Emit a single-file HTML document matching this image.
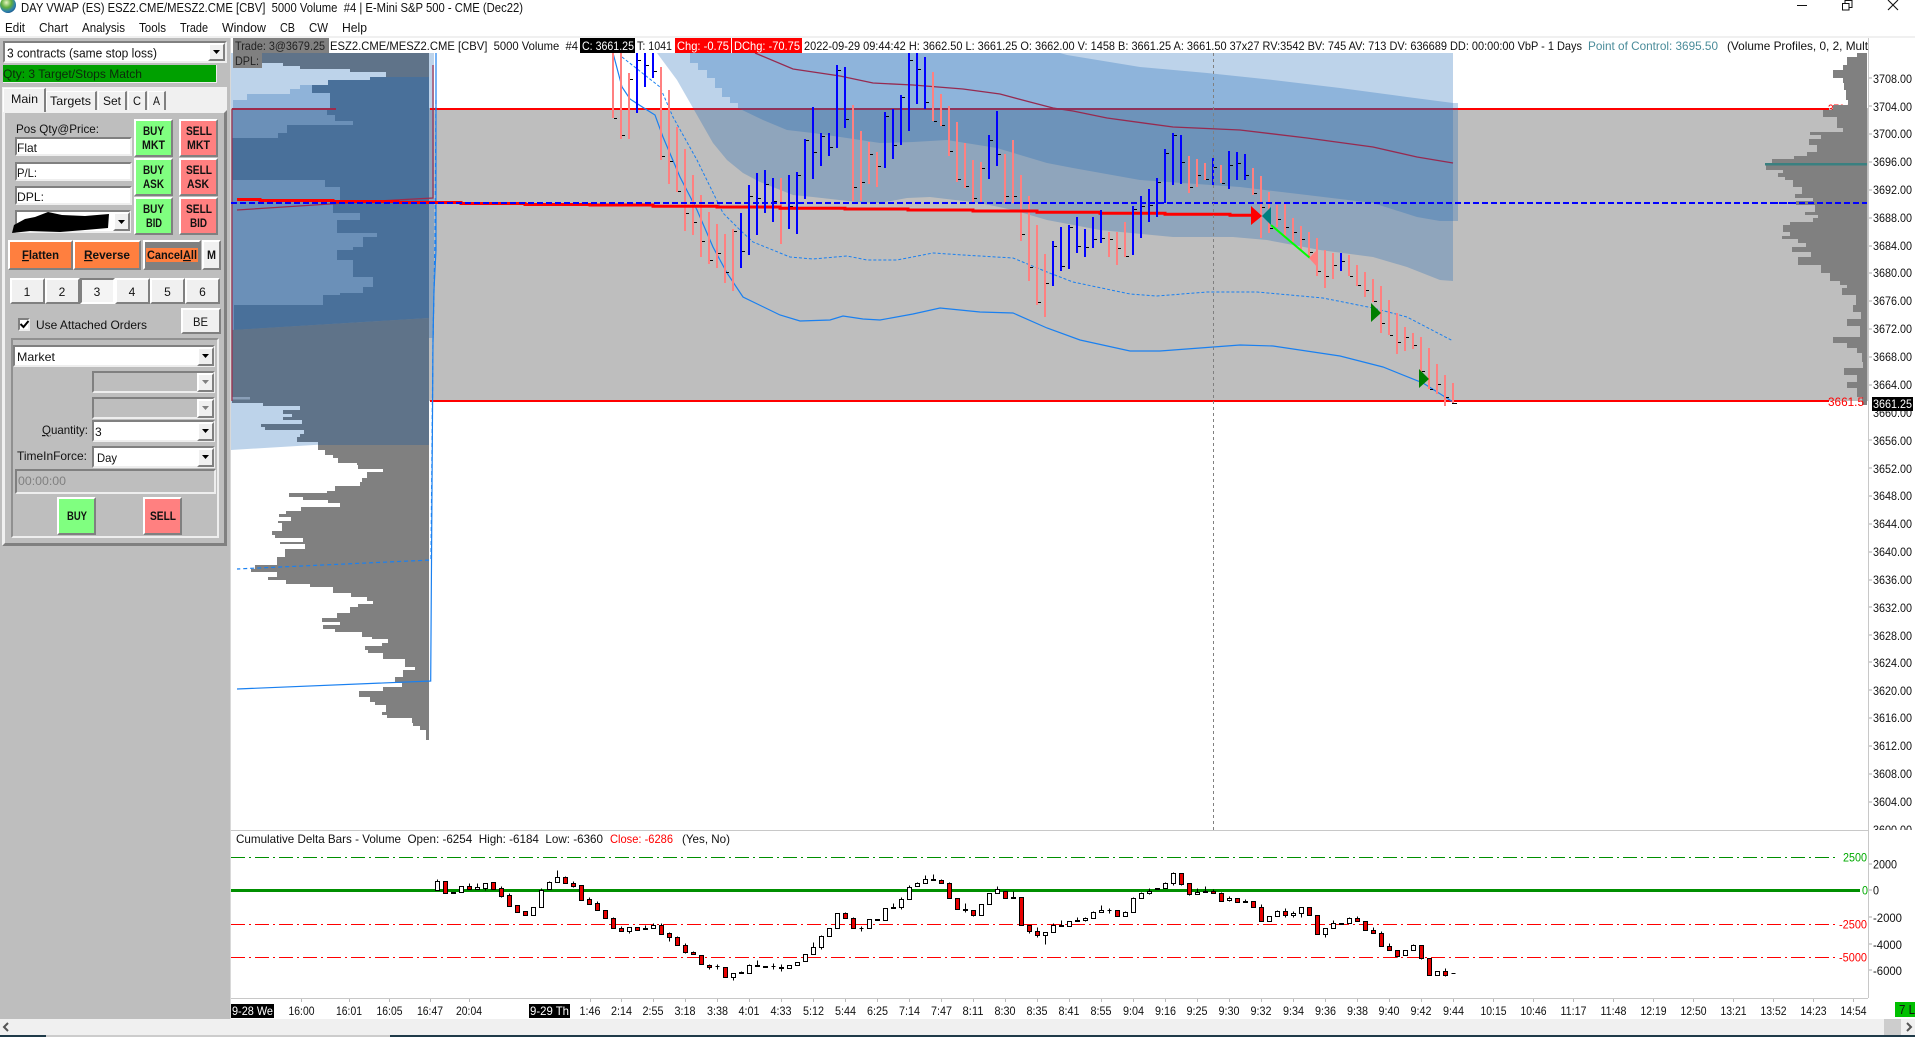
<!DOCTYPE html>
<html><head><meta charset="utf-8"><title>DAY VWAP</title>
<style>
html,body{margin:0;padding:0;width:1915px;height:1037px;overflow:hidden;background:#fff}
.b{position:absolute;box-sizing:border-box}
.r{border:2px solid;border-color:#fff #808080 #808080 #fff}
.s{border:2px solid;border-color:#808080 #eee #eee #808080;background:#fff}
.l{background:#f0f0f0}
svg{position:absolute;left:0;top:0}
text{font-family:"Liberation Sans",sans-serif;font-size:12px;fill:#111;white-space:pre}
.m{font-size:12.5px}
.p{font-weight:bold;font-size:12px;fill:#111}
.w{fill:#fff}.red{fill:#f00}.grn{fill:#0a0}
.c{text-anchor:middle}
</style></head><body>
<div class="b" style="left:0;top:38px;width:230px;height:981px;background:#bebebe"></div>
<div class="b" style="left:0;top:36px;width:1915px;height:2px;background:#f0f0f0"></div>
<div class="b" style="left:230px;top:38px;width:1px;height:981px;background:#d8d8d8"></div>
<div class="b s" style="left:3px;top:41px;width:224px;height:22px"></div>
<div class="b r l" style="left:208px;top:43px;width:17px;height:18px"></div>
<div class="b" style="left:3px;top:65px;width:214px;height:18px;background:#00a000;border-right:1px solid #eee;border-bottom:1px solid #eee"></div>
<div class="b l" style="left:2px;top:87px;width:225px;height:23px"></div>
<div class="b" style="left:2px;top:110px;width:225px;height:436px;background:#bebebe;border:3px solid;border-color:#f0f0f0 #808080 #808080 #f0f0f0"></div>
<div class="b l" style="left:3px;top:88px;width:43px;height:24px;border:1px solid #fff;border-right:2px solid #808080;border-bottom:0"></div>
<div class="b l" style="left:46px;top:91px;width:51px;height:19px;border-left:1px solid #fff;border-top:1px solid #fff;border-right:2px solid #808080"></div>
<div class="b l" style="left:98px;top:91px;width:29px;height:19px;border-left:1px solid #fff;border-top:1px solid #fff;border-right:2px solid #808080"></div>
<div class="b l" style="left:128px;top:91px;width:19px;height:19px;border-left:1px solid #fff;border-top:1px solid #fff;border-right:2px solid #808080"></div>
<div class="b l" style="left:148px;top:91px;width:18px;height:19px;border-left:1px solid #fff;border-top:1px solid #fff;border-right:2px solid #808080"></div>
<div class="b s" style="left:15px;top:137px;width:117px;height:19px"></div>
<div class="b s" style="left:15px;top:162px;width:117px;height:19px"></div>
<div class="b s" style="left:15px;top:186px;width:117px;height:19px"></div>
<div class="b s" style="left:15px;top:210px;width:116px;height:23px"></div>
<div class="b r l" style="left:113px;top:212px;width:17px;height:19px"></div>
<div class="b r" style="left:134px;top:119px;width:39px;height:38px;background:#80ff80"></div>
<div class="b r" style="left:179px;top:119px;width:39px;height:38px;background:#ff8080"></div>
<div class="b r" style="left:134px;top:158px;width:39px;height:38px;background:#80ff80"></div>
<div class="b r" style="left:179px;top:158px;width:39px;height:38px;background:#ff8080"></div>
<div class="b r" style="left:134px;top:197px;width:39px;height:38px;background:#80ff80"></div>
<div class="b r" style="left:179px;top:197px;width:39px;height:38px;background:#ff8080"></div>
<div class="b r" style="left:8px;top:240px;width:65px;height:30px;background:#ff7f3f"></div>
<div class="b r" style="left:73px;top:240px;width:68px;height:30px;background:#ff7f3f"></div>
<div class="b r" style="left:143px;top:240px;width:58px;height:30px;background:#808080"></div>
<div class="b" style="left:146px;top:248px;width:52px;height:14px;background:#ff7f3f"></div>
<div class="b r l" style="left:202px;top:240px;width:19px;height:30px"></div>
<div class="b r l" style="left:10px;top:278px;width:35px;height:26px"></div>
<div class="b r l" style="left:45px;top:278px;width:35px;height:26px"></div>
<div class="b" style="left:80px;top:278px;width:35px;height:26px;background:#f4f4f4;border:2px solid;border-color:#808080 #fff #fff #808080"></div>
<div class="b r l" style="left:115px;top:278px;width:35px;height:26px"></div>
<div class="b r l" style="left:150px;top:278px;width:35px;height:26px"></div>
<div class="b r l" style="left:185px;top:278px;width:35px;height:26px"></div>
<div class="b s" style="left:18px;top:318px;width:12px;height:13px"></div>
<div class="b r l" style="left:181px;top:308px;width:40px;height:26px"></div>
<div class="b" style="left:11px;top:338px;width:208px;height:200px;border:2px solid;border-color:#909090 #eee #eee #909090"></div>
<div class="b s" style="left:13px;top:345px;width:202px;height:22px"></div>
<div class="b r l" style="left:197px;top:347px;width:17px;height:19px"></div>
<div class="b s" style="left:92px;top:371px;width:123px;height:22px;background:#bebebe"></div>
<div class="b r l" style="left:197px;top:373px;width:17px;height:19px"></div>
<div class="b s" style="left:92px;top:397px;width:123px;height:22px;background:#bebebe"></div>
<div class="b r l" style="left:197px;top:399px;width:17px;height:19px"></div>
<div class="b s" style="left:92px;top:420px;width:123px;height:22px"></div>
<div class="b r l" style="left:197px;top:422px;width:17px;height:19px"></div>
<div class="b s" style="left:92px;top:446px;width:123px;height:22px"></div>
<div class="b r l" style="left:197px;top:448px;width:17px;height:19px"></div>
<div class="b s" style="left:15px;top:469px;width:201px;height:25px;background:#bebebe"></div>
<div class="b r" style="left:57px;top:497px;width:39px;height:38px;background:#80ff80"></div>
<div class="b r" style="left:143px;top:497px;width:39px;height:38px;background:#ff8080"></div>
<div class="b l" style="left:0;top:1019px;width:1915px;height:16px"></div>
<div class="b" style="left:1884px;top:1019px;width:17px;height:16px;background:#cdcdcd"></div>
<div class="b" style="left:0;top:1035px;width:46px;height:2px;background:#1f3a48"></div>
<div class="b" style="left:46px;top:1035px;width:344px;height:2px;background:#ccc"></div>
<div class="b" style="left:390px;top:1035px;width:1525px;height:2px;background:#1f3a48"></div>
<svg width="1915" height="1037" viewBox="0 0 1915 1037" xmlns="http://www.w3.org/2000/svg">
<defs>
<radialGradient id="g" cx=".4" cy=".35" r=".7"><stop offset="0" stop-color="#e6f4c0"/><stop offset=".45" stop-color="#5fae3c"/><stop offset=".8" stop-color="#2b7fb0"/><stop offset="1" stop-color="#17507f"/></radialGradient>
</defs>
<circle cx="8" cy="5" r="8" fill="url(#g)"/>
<text class="m" x="21" y="12" textLength="502" lengthAdjust="spacingAndGlyphs">DAY VWAP (ES) ESZ2.CME/MESZ2.CME [CBV]  5000 Volume  #4 | E-Mini S&amp;P 500 - CME (Dec22)</text>
<text class="m" x="5" y="32" textLength="20" lengthAdjust="spacingAndGlyphs">Edit</text>
<text class="m" x="39" y="32" textLength="29" lengthAdjust="spacingAndGlyphs">Chart</text>
<text class="m" x="82" y="32" textLength="43" lengthAdjust="spacingAndGlyphs">Analysis</text>
<text class="m" x="139" y="32" textLength="27" lengthAdjust="spacingAndGlyphs">Tools</text>
<text class="m" x="180" y="32" textLength="28" lengthAdjust="spacingAndGlyphs">Trade</text>
<text class="m" x="222" y="32" textLength="44" lengthAdjust="spacingAndGlyphs">Window</text>
<text class="m" x="280" y="32" textLength="15" lengthAdjust="spacingAndGlyphs">CB</text>
<text class="m" x="309" y="32" textLength="19" lengthAdjust="spacingAndGlyphs">CW</text>
<text class="m" x="342" y="32" textLength="25" lengthAdjust="spacingAndGlyphs">Help</text>
<path d="M1797 5.500h10" stroke="#111" fill="none"/>
<path d="M1845 3.500v-3h7v7h-3M1842.500 3.500h6.500v6.500h-6.500z" stroke="#111" fill="none"/>
<path d="M1888 0l10 10M1898 0l-10 10" stroke="#111" stroke-width="1.100" fill="none"/>

<text x="7" y="57.500" class="m" textLength="150" lengthAdjust="spacingAndGlyphs">3 contracts (same stop loss)</text>
<path d="M213 50h7l-3.500 4z" fill="#000"/>
<text x="3" y="78" textLength="139" lengthAdjust="spacingAndGlyphs" style="fill:#0b2a0b">Qty: 3 Target/Stops Match</text>
<text x="11" y="103" textLength="27" lengthAdjust="spacingAndGlyphs">Main</text>
<text x="50" y="105" textLength="41" lengthAdjust="spacingAndGlyphs">Targets</text>
<text x="103" y="105" textLength="18" lengthAdjust="spacingAndGlyphs">Set</text>
<text x="133" y="105" textLength="8" lengthAdjust="spacingAndGlyphs">C</text>
<text x="153" y="105" textLength="7" lengthAdjust="spacingAndGlyphs">A</text>
<text x="16" y="133" textLength="83" lengthAdjust="spacingAndGlyphs">Pos Qty@Price:</text>
<text x="17" y="152" textLength="20" lengthAdjust="spacingAndGlyphs">Flat</text>
<text x="17" y="177" textLength="20" lengthAdjust="spacingAndGlyphs">P/L:</text>
<text x="17" y="201" textLength="27" lengthAdjust="spacingAndGlyphs">DPL:</text>
<path d="M12 233L14 225 25 219 35 217 48 212 62 215 85 216 109 214 108 228 85 230 60 232 30 231Z" fill="#000"/>
<path d="M118 220h7l-3.500 4z" fill="#000"/>
<text class="p" x="143" y="135" textLength="21" lengthAdjust="spacingAndGlyphs">BUY</text>
<text class="p" x="142" y="149" textLength="23" lengthAdjust="spacingAndGlyphs">MKT</text>
<text class="p" x="186" y="135" textLength="26" lengthAdjust="spacingAndGlyphs">SELL</text>
<text class="p" x="187" y="149" textLength="23" lengthAdjust="spacingAndGlyphs">MKT</text>
<text class="p" x="143" y="174" textLength="21" lengthAdjust="spacingAndGlyphs">BUY</text>
<text class="p" x="143" y="188" textLength="21" lengthAdjust="spacingAndGlyphs">ASK</text>
<text class="p" x="186" y="174" textLength="26" lengthAdjust="spacingAndGlyphs">SELL</text>
<text class="p" x="187" y="188" textLength="22" lengthAdjust="spacingAndGlyphs">ASK</text>
<text class="p" x="143" y="213" textLength="21" lengthAdjust="spacingAndGlyphs">BUY</text>
<text class="p" x="146" y="227" textLength="16" lengthAdjust="spacingAndGlyphs">BID</text>
<text class="p" x="186" y="213" textLength="26" lengthAdjust="spacingAndGlyphs">SELL</text>
<text class="p" x="190" y="227" textLength="17" lengthAdjust="spacingAndGlyphs">BID</text>
<text class="p" x="22" y="259" textLength="37" lengthAdjust="spacingAndGlyphs"><tspan text-decoration="underline">F</tspan>latten</text>
<text class="p" x="84" y="259" textLength="46" lengthAdjust="spacingAndGlyphs"><tspan text-decoration="underline">R</tspan>everse</text>
<text class="p" x="147" y="259" textLength="50" lengthAdjust="spacingAndGlyphs">Cancel<tspan text-decoration="underline">A</tspan>ll</text>
<text class="p" x="207" y="259" textLength="9" lengthAdjust="spacingAndGlyphs">M</text>
<text class="c" x="27" y="296">1</text><text class="c" x="62" y="296">2</text><text class="c" x="97" y="296">3</text><text class="c" x="132" y="296">4</text><text class="c" x="167.500" y="296">5</text><text class="c" x="202.500" y="296">6</text>
<path d="M20.500 324l3 3 5-6" stroke="#000" stroke-width="2" fill="none"/>
<text x="36" y="329" textLength="111" lengthAdjust="spacingAndGlyphs">Use Attached Orders</text>
<text x="193" y="326" textLength="15" lengthAdjust="spacingAndGlyphs">BE</text>
<text x="17" y="361" textLength="38" lengthAdjust="spacingAndGlyphs">Market</text>
<path d="M202 354h7l-3.500 4z" fill="#000"/>
<path d="M202 380h7l-3.500 4zM202 406h7l-3.500 4z" fill="#808080"/>
<text x="42" y="434" textLength="46" lengthAdjust="spacingAndGlyphs"><tspan text-decoration="underline">Q</tspan>uantity:</text>
<text x="95" y="436">3</text>
<path d="M202 429h7l-3.500 4z" fill="#000"/>
<text x="17" y="460" textLength="70" lengthAdjust="spacingAndGlyphs">TimeInForce:</text>
<text x="97" y="462" textLength="20" lengthAdjust="spacingAndGlyphs">Day</text>
<path d="M202 455h7l-3.500 4z" fill="#000"/>
<text x="18" y="485" textLength="48" lengthAdjust="spacingAndGlyphs" style="fill:#808080">00:00:00</text>
<text class="p" x="67" y="520" textLength="20" lengthAdjust="spacingAndGlyphs">BUY</text>
<text class="p" x="150" y="520" textLength="26" lengthAdjust="spacingAndGlyphs">SELL</text>

<rect x="231" y="108" width="1637" height="293" fill="#bebebe"/>
<path d="M231 53H434V108H231Z" fill="#bdd3ea"/>
<path d="M231 401H429V438L231 450Z" fill="#bdd3ea"/>
<path d="M429 53H262V63H283V66H300V69H350V72H386V77H429Z" fill="#5f7389"/>
<path d="M233 108V100H247V94H290V89H300V85H330V108Z" fill="#8fb3d9"/>
<path d="M232 108H429V330H232Z" fill="#6b90b8"/>
<path d="M429 77H370V80H328V85H312V93H330V108H327V115H335V121H353V125H287V133H278V138H232V180H325V187H340V200H333V213H360V220H337V233H377V237H363V247H353V250H337V260H353V277H373V287H363V293H340V295H323V305H234V330L429 318Z" fill="#49709a"/>
<path d="M232 330L429 318V445H318V442H297V437H300V434H304V430H265V427H261V424H302V420H283V417H292V414H283V410H300V406H263V403H232Z" fill="#5f7389"/>
<rect x="232" y="397" width="18" height="2.500" fill="#8a9fb8"/>
<path d="M429 445H318V450H325V455H333V458H338V463H357V465H358V469H383V472H367V478H362V482H360V486H335V491H327V493H289V497H303V500H328V503H340V507H301V511H286V514H279V517H291V521H278V523H282V531H272V535H275V538H303V542H280V544H305V549H285V557H277V565H255V569H251V572H277V577H268V580H286V584H310V587H333V593H351V597H367V601H373V604H358V607H350V613H337V618H322V622H340V625H323V629H335V632H362V637H372V639H388V643H382V646H365V650H368V653H383V659H405V667H415V670H403V677H395V683H402V687H383V691H359V697H370V702H375V705H386V712H382V715H387V718H412V723H413V726H420V730H426V740H429Z" fill="#808080"/>
<rect x="429" y="53" width="5" height="55" fill="#bdd3ea"/>
<rect x="429" y="108" width="5" height="230" fill="#8ea4bc"/>
<text x="1828" y="113" class="red" textLength="36" lengthAdjust="spacingAndGlyphs">3704.00</text>
<rect x="1828" y="110" width="40" height="8" fill="#bebebe"/>
<path d="M430 109H1829M430 401H1829" stroke="#f00" stroke-width="2" fill="none"/>
<path d="M232 109V401M433 65V198L395 200 330 204 237 210" stroke="#9d2b4c" stroke-width="1.200" fill="none"/>
<path d="M232 109H336" stroke="#9d2b4c" stroke-width="2" fill="none"/>
<path d="M657 53L677 80 693 108 713 143 727 160 743 173 760 182 793 195 813 197 857 202 880 203 907 198 930 197 980 203 1013 210 1047 220 1100 230 1173 237 1233 237 1267 240 1320 250 1373 257 1407 267 1440 280 1453 281V53Z" fill="rgb(28,103,183)" fill-opacity=".29"/>
<path d="M690 53V63H698V70H707V78H715V88H722V97H730V103H738V108L763 120 787 130 813 133 847 138 880 143 913 142 947 140 997 148 1047 163 1073 168 1140 180 1240 187 1307 195 1373 203 1417 217 1440 221H1458V103H1453L1407 97 1340 88 1273 80 1207 73 1140 67 1067 55 1060 53Z" fill="rgb(28,103,183)" fill-opacity=".29"/>
<path d="M755 53L793 69 840 76 873 83 913 85 963 89 1000 94 1030 102 1053 108 1073 111 1107 118 1173 127 1240 130 1307 138 1373 147 1417 157 1453 163" stroke="#962a50" stroke-width="1.300" fill="none"/>
<path d="M622 57L660 87 673 117 697 160 723 213 740 230 753 242 790 257 813 259 847 256 867 260 897 260 933 253 963 255 1013 258 1047 272 1073 282 1130 294 1157 296 1207 292 1257 292 1323 298 1373 308 1407 317 1453 341" stroke="#1a80f0" stroke-width="1" stroke-dasharray="3 2" fill="none"/>
<path d="M613 53L622 87 630 99 647 110 655 115 663 137 680 177 697 210 713 247 727 273 743 297 780 315 800 321 830 320 843 316 863 319 880 320 913 314 940 308 980 312 1013 313 1047 328 1080 340 1130 351 1160 351 1200 348 1240 345 1273 346 1340 356 1383 367 1423 383 1453 402" stroke="#1a80f0" stroke-width="1.200" fill="none"/>
<path d="M436 53V250L434 290 433 340 431.700 533 430.700 681 237 689" stroke="#1a80f0" stroke-width="1.200" fill="none"/>
<path d="M436 100L435 240 433 340 431 560 237 569" stroke="#1a80f0" stroke-width="1.200" stroke-dasharray="4 3" fill="none"/>
<path d="M613 53V118M621 53V139M629 73V139M661 67V160M669 90V184M677 127V192M685 149V231M693 175V235M701 195V257M709 212V264M717 224V268M725 234V283M733 229V291M781 178V244M853 105V201M861 131V201M869 142V184M877 152V187M933 72V121M941 94V126M949 106V156M957 122V182M965 143V188M973 160V203M981 162V202M1005 154V203M1013 140V203M1021 175V241M1029 196V281M1037 225V305M1045 254V317M1109 232V257M1117 232V265M1125 222V257M1189 156V193M1197 159V187M1205 163V180M1221 165V183M1253 168V195M1261 176V238M1269 192V233M1277 205V227M1285 203V237M1293 218V242M1301 226V250M1309 232V258M1317 238V276M1325 250V288M1333 253V279M1349 255V276M1357 265V286M1365 272V297M1373 279V302M1381 286V333M1389 300V335M1397 313V354M1405 327V351M1413 333V349M1421 337V373M1429 348V389M1437 364V394M1445 375V406M1453 383V403" stroke="#ff8080" stroke-width="2" fill="none"/>
<path d="M237 199.500H260V200.500H333V201.500H398V202.500H461V203.500H525V204.500H590V205H653V206.300H717V207H780V208.300H845V209H908V210H973V211H1037V212.300H1100V213.300H1165V214.300H1230V215.300H1253" stroke="#f00" stroke-width="3" fill="none"/>
<path d="M637 53V113M645 53V87M653 53V78M741 213V268M749 185V255M757 173V235M765 170V213M773 178V222M789 175V229M797 172V234M805 139V199M813 107V179M821 133V166M829 133V156M837 65V148M845 67V128M885 112V168M893 109V159M901 95V145M909 53V131M917 53V104M925 57V109M989 135V179M997 111V166M1053 241V286M1061 227V271M1069 225V269M1077 217V253M1085 229V257M1093 217V248M1101 210V243M1133 206V255M1141 196V238M1149 189V222M1157 178V217M1165 149V203M1173 133V185M1181 135V184M1213 158V185M1229 151V189M1237 152V180M1245 154V180M1341 253V271" stroke="#00f" stroke-width="2" fill="none"/>
<path d="M614 118.500h3M622 135.500h3M630 79.500h3M638 60.500h3M646 65.500h3M654 71.500h3M662 156.500h3M670 161.500h3M678 191.500h3M686 213.500h3M694 222.500h3M702 241.500h3M710 260.500h3M718 253.500h3M726 272.500h3M734 231.500h3M742 251.500h3M750 196.500h3M758 198.500h3M766 184.500h3M774 201.500h3M782 202.500h3M790 206.500h3M798 175.500h3M806 140.500h3M814 152.500h3M822 136.500h3M830 147.500h3M838 70.500h3M846 119.500h3M854 187.500h3M862 182.500h3M870 154.500h3M878 166.500h3M886 116.500h3M894 145.500h3M902 97.500h3M910 60.500h3M918 69.500h3M926 102.500h3M934 121.500h3M942 125.500h3M950 151.500h3M958 179.500h3M966 186.500h3M974 198.500h3M982 168.500h3M990 140.500h3M998 154.500h3M1006 196.500h3M1014 196.500h3M1022 234.500h3M1030 267.500h3M1038 302.500h3M1046 283.500h3M1054 246.500h3M1062 266.500h3M1070 227.500h3M1078 246.500h3M1086 247.500h3M1094 239.500h3M1102 238.500h3M1110 239.500h3M1118 248.500h3M1126 256.500h3M1134 209.500h3M1142 206.500h3M1150 205.500h3M1158 182.500h3M1166 153.500h3M1174 135.500h3M1182 162.500h3M1190 187.500h3M1198 175.500h3M1206 179.500h3M1214 167.500h3M1222 183.500h3M1230 165.500h3M1238 163.500h3M1246 175.500h3M1254 193.500h3M1262 207.500h3M1270 228.500h3M1278 219.500h3M1286 227.500h3M1294 232.500h3M1302 239.500h3M1310 252.500h3M1318 271.500h3M1326 276.500h3M1334 265.500h3M1342 261.500h3M1350 276.500h3M1358 285.500h3M1366 290.500h3M1374 301.500h3M1382 323.500h3M1390 335.500h3M1398 342.500h3M1406 337.500h3M1414 345.500h3M1422 371.500h3M1430 389.500h3M1438 384.500h3M1446 397.500h3M1452 403.500h5" stroke="#000" stroke-width="1" fill="none"/>
<path d="M1271 225L1310 258" stroke="#0f0" stroke-width="2" fill="none"/>
<path d="M1251 206L1262 216 1251 225Z" fill="#f00"/>
<path d="M1271 207L1262 216 1271 225Z" fill="#007f7f"/>
<path d="M1318 249L1309 258 1318 268Z" fill="#ff8080"/>
<path d="M1371 303L1381 313 1371 322Z" fill="#007f00"/>
<path d="M1419 369L1429 379 1419 388Z" fill="#007f00"/>
<path d="M231 203H1868" stroke="#00f" stroke-width="2" stroke-dasharray="6 3" fill="none"/>
<path d="M1213.500 53V830" stroke="#808080" stroke-dasharray="3 3" fill="none"/>
<path d="M1867 53H1857V57H1847V65H1843V70H1833V78H1843V83H1844V90H1846V100H1848V105H1833V110H1823V117H1837V128H1843V132H1810V135H1821V139H1809V145H1817V152H1807V156H1794V159H1772V163H1766V170H1783V173H1778V177H1785V180H1793V187H1802V194H1795V198H1813V201H1796V205H1815V212H1805V215H1818V218H1813V222H1790V225H1783V232H1790V236H1782V239H1798V243H1806V247H1792V252H1811V257H1798V265H1821V273H1830V281H1840V285H1847V288H1842V295H1856V305H1853V312H1861V319H1847V326H1860V337H1833V343H1847V348H1857V353H1862V362H1863V368H1844V375H1857V382H1847V388H1857V397H1862V405H1867Z" fill="#808080"/>
<rect x="1765" y="163" width="102" height="2.500" fill="#3a8080"/>
<path d="M1772 203H1867" stroke="#00f" stroke-width="2" stroke-dasharray="6 3" fill="none"/>
<text x="1828" y="406" class="red" textLength="36" lengthAdjust="spacingAndGlyphs">3661.5</text>
<rect x="231" y="38" width="1637" height="15" fill="#fff"/>
<rect x="233" y="38" width="96" height="15" fill="#808080"/>
<rect x="233" y="53" width="29" height="15" fill="#808080"/>
<text x="235" y="50" textLength="90" lengthAdjust="spacingAndGlyphs" style="fill:#222">Trade: 3@3679.25</text>
<text x="235" y="65" textLength="24" lengthAdjust="spacingAndGlyphs" style="fill:#222">DPL:</text>
<text x="330" y="50" textLength="248" lengthAdjust="spacingAndGlyphs">ESZ2.CME/MESZ2.CME [CBV]  5000 Volume  #4</text>
<rect x="580" y="38" width="55" height="15" fill="#000"/>
<text class="w" x="582" y="50" textLength="52" lengthAdjust="spacingAndGlyphs">C: 3661.25</text>
<text x="637" y="50" textLength="35" lengthAdjust="spacingAndGlyphs">T: 1041</text>
<rect x="675" y="38" width="56" height="15" fill="#f00"/><rect x="732" y="38" width="70" height="15" fill="#f00"/>
<text class="w" x="677" y="50" textLength="52" lengthAdjust="spacingAndGlyphs">Chg: -0.75</text>
<text class="w" x="734" y="50" textLength="66" lengthAdjust="spacingAndGlyphs">DChg: -70.75</text>
<text x="804" y="50" textLength="778" lengthAdjust="spacingAndGlyphs">2022-09-29 09:44:42 H: 3662.50 L: 3661.25 O: 3662.00 V: 1458 B: 3661.25 A: 3661.50 37x27 RV:3542 BV: 745 AV: 713 DV: 636689 DD: 00:00:00 VbP - 1 Days</text>
<text x="1588" y="50" textLength="130" lengthAdjust="spacingAndGlyphs" style="fill:#4a8c9a">Point of Control: 3695.50</text>
<text x="1727" y="50" textLength="141" lengthAdjust="spacingAndGlyphs">(Volume Profiles, 0, 2, Mult</text>
<path d="M1868.500 38V998" stroke="#c8c8c8" fill="none"/>
<path d="M1869 78h3M1869 106h3M1869 134h3M1869 162h3M1869 190h3M1869 218h3M1869 246h3M1869 273h3M1869 301h3M1869 329h3M1869 357h3M1869 385h3M1869 440h3M1869 468h3M1869 496h3M1869 524h3M1869 552h3M1869 580h3M1869 607h3M1869 635h3M1869 662h3M1869 690h3M1869 718h3M1869 746h3M1869 774h3M1869 802h3" stroke="#aaa" fill="none"/>
<text x="1873" y="83" textLength="39" lengthAdjust="spacingAndGlyphs">3708.00</text>
<text x="1873" y="111" textLength="39" lengthAdjust="spacingAndGlyphs">3704.00</text>
<text x="1873" y="138" textLength="39" lengthAdjust="spacingAndGlyphs">3700.00</text>
<text x="1873" y="166" textLength="39" lengthAdjust="spacingAndGlyphs">3696.00</text>
<text x="1873" y="194" textLength="39" lengthAdjust="spacingAndGlyphs">3692.00</text>
<text x="1873" y="222" textLength="39" lengthAdjust="spacingAndGlyphs">3688.00</text>
<text x="1873" y="250" textLength="39" lengthAdjust="spacingAndGlyphs">3684.00</text>
<text x="1873" y="277" textLength="39" lengthAdjust="spacingAndGlyphs">3680.00</text>
<text x="1873" y="305" textLength="39" lengthAdjust="spacingAndGlyphs">3676.00</text>
<text x="1873" y="333" textLength="39" lengthAdjust="spacingAndGlyphs">3672.00</text>
<text x="1873" y="361" textLength="39" lengthAdjust="spacingAndGlyphs">3668.00</text>
<text x="1873" y="389" textLength="39" lengthAdjust="spacingAndGlyphs">3664.00</text>
<text x="1873" y="417" textLength="39" lengthAdjust="spacingAndGlyphs">3660.00</text>
<rect x="1872" y="397" width="41" height="14" fill="#000"/>
<text class="w" x="1873" y="408" textLength="39" lengthAdjust="spacingAndGlyphs">3661.25</text>
<text x="1873" y="445" textLength="39" lengthAdjust="spacingAndGlyphs">3656.00</text>
<text x="1873" y="473" textLength="39" lengthAdjust="spacingAndGlyphs">3652.00</text>
<text x="1873" y="500" textLength="39" lengthAdjust="spacingAndGlyphs">3648.00</text>
<text x="1873" y="528" textLength="39" lengthAdjust="spacingAndGlyphs">3644.00</text>
<text x="1873" y="556" textLength="39" lengthAdjust="spacingAndGlyphs">3640.00</text>
<text x="1873" y="584" textLength="39" lengthAdjust="spacingAndGlyphs">3636.00</text>
<text x="1873" y="612" textLength="39" lengthAdjust="spacingAndGlyphs">3632.00</text>
<text x="1873" y="640" textLength="39" lengthAdjust="spacingAndGlyphs">3628.00</text>
<text x="1873" y="667" textLength="39" lengthAdjust="spacingAndGlyphs">3624.00</text>
<text x="1873" y="695" textLength="39" lengthAdjust="spacingAndGlyphs">3620.00</text>
<text x="1873" y="722" textLength="39" lengthAdjust="spacingAndGlyphs">3616.00</text>
<text x="1873" y="750" textLength="39" lengthAdjust="spacingAndGlyphs">3612.00</text>
<text x="1873" y="778" textLength="39" lengthAdjust="spacingAndGlyphs">3608.00</text>
<text x="1873" y="806" textLength="39" lengthAdjust="spacingAndGlyphs">3604.00</text>
<text x="1873" y="834" textLength="39" lengthAdjust="spacingAndGlyphs">3600.00</text>
<rect x="231" y="830" width="1684" height="189" fill="#fff"/>
<path d="M231 830.500H1868M231 998.500H1868M1868.500 830V998" stroke="#c8c8c8" fill="none"/>
<text x="236" y="843" textLength="367" lengthAdjust="spacingAndGlyphs">Cumulative Delta Bars - Volume  Open: -6254  High: -6184  Low: -6360</text>
<text x="610" y="843" textLength="63" lengthAdjust="spacingAndGlyphs" class="red">Close: -6286</text>
<text x="682" y="843" textLength="48" lengthAdjust="spacingAndGlyphs">(Yes, No)</text>
<path d="M231 857.500H1838" stroke="#008f00" stroke-dasharray="14 4 2 4" fill="none"/>
<path d="M231 924.500H1838M231 957.500H1838" stroke="#f00" stroke-dasharray="14 4 2 4" fill="none"/>
<path d="M231 890.500H1860" stroke="#008f00" stroke-width="3" fill="none"/>
<g transform="translate(.5 .5)" fill="none" stroke="#000">
<path d="M437 879V881M469 883V886M477 883V887M485 888V890M501 886V897M509 893V895M541 888V890M549 881V882M557 870V877M565 876V877M573 881V887M589 897V899M597 901V903M613 917V918M621 926V928M629 931V933M645 925V929M653 923V925M661 923V925M669 932V941M677 936V937M685 943V953M693 951V952M709 964V969M717 964V969M733 977V980M741 971V973M749 964V965M757 960V966M773 963V969M781 964V971M813 942V947M821 935V949M845 912V913M853 917V918M861 926V931M893 903V908M901 897V909M909 885V887M917 882V883M925 875V879M933 874V880M941 879V880M949 882V883M965 903V912M973 915V916M997 886V889M1013 891V898M1029 931V933M1037 927V937M1045 932V944M1053 923V925M1061 920V926M1077 917V921M1085 917V921M1093 911V912M1101 905V910M1109 908V913M1125 911V912M1133 897V898M1141 892V893M1149 888V894M1165 882V883M1173 872V885M1181 873V885M1189 883V895M1197 888V892M1205 886V892M1213 889V891M1221 892V893M1229 896V901M1245 899V902M1261 904V907M1277 910V911M1285 908V917M1293 911V917M1301 907V917M1325 934V937M1333 920V923M1349 917V918M1357 916V918M1373 927V930M1381 931V933M1389 943V946M1397 956V957M1413 944V945M1421 958V959M1445 968V976M715 966h4M771 966h4M859 928h4M1107 910h4M1451 973h4"/>
<path fill="#fff" d="M435 881h4V890h-4zM459 886h4V892h-4zM475 887h4V889h-4zM483 883h4V888h-4zM531 907h4V915h-4zM539 890h4V907h-4zM547 882h4V889h-4zM555 877h4V882h-4zM627 927h4V931h-4zM651 925h4V928h-4zM731 973h4V977h-4zM747 965h4V973h-4zM787 965h4V968h-4zM795 962h4V965h-4zM803 954h4V961h-4zM811 947h4V954h-4zM819 936h4V947h-4zM827 928h4V936h-4zM835 913h4V928h-4zM867 919h4V928h-4zM883 908h4V920h-4zM899 899h4V907h-4zM907 887h4V899h-4zM915 883h4V886h-4zM923 879h4V883h-4zM979 904h4V915h-4zM987 893h4V904h-4zM995 889h4V893h-4zM1043 932h4V935h-4zM1051 925h4V932h-4zM1067 921h4V926h-4zM1083 918h4V920h-4zM1091 912h4V918h-4zM1099 910h4V912h-4zM1123 912h4V916h-4zM1131 898h4V912h-4zM1139 893h4V898h-4zM1147 891h4V893h-4zM1163 883h4V888h-4zM1171 873h4V883h-4zM1195 892h4V894h-4zM1227 898h4V900h-4zM1267 916h4V921h-4zM1275 911h4V916h-4zM1291 913h4V915h-4zM1299 907h4V913h-4zM1323 928h4V934h-4zM1331 923h4V928h-4zM1347 918h4V923h-4zM1403 950h4V955h-4zM1411 945h4V950h-4zM1435 971h4V975h-4z"/>
<path fill="#e80000" d="M443 881h4V893h-4zM467 886h4V889h-4zM491 882h4V889h-4zM499 888h4V896h-4zM507 895h4V906h-4zM515 905h4V912h-4zM523 911h4V915h-4zM563 877h4V883h-4zM571 883h4V886h-4zM579 885h4V900h-4zM587 899h4V904h-4zM595 903h4V910h-4zM603 910h4V918h-4zM611 918h4V928h-4zM619 928h4V931h-4zM635 927h4V930h-4zM659 925h4V934h-4zM667 933h4V937h-4zM675 937h4V945h-4zM683 945h4V952h-4zM691 952h4V954h-4zM699 955h4V964h-4zM707 965h4V967h-4zM723 967h4V977h-4zM843 913h4V918h-4zM851 918h4V928h-4zM939 880h4V883h-4zM947 883h4V898h-4zM955 898h4V909h-4zM971 910h4V915h-4zM1003 891h4V898h-4zM1019 897h4V925h-4zM1027 925h4V931h-4zM1035 931h4V935h-4zM1115 910h4V916h-4zM1179 873h4V884h-4zM1187 883h4V894h-4zM1211 891h4V893h-4zM1219 893h4V901h-4zM1235 898h4V902h-4zM1251 901h4V907h-4zM1259 907h4V921h-4zM1283 911h4V915h-4zM1307 907h4V915h-4zM1315 915h4V934h-4zM1355 918h4V921h-4zM1363 921h4V930h-4zM1371 930h4V933h-4zM1379 933h4V946h-4zM1387 946h4V950h-4zM1395 950h4V956h-4zM1419 945h4V958h-4zM1427 958h4V975h-4zM1443 971h4V975h-4z"/>
<path fill="#000" d="M451 892h4V893h-4zM643 928h4V929h-4zM739 972h4V973h-4zM755 965h4V966h-4zM763 966h4V967h-4zM779 967h4V968h-4zM875 919h4V920h-4zM891 907h4V908h-4zM931 879h4V880h-4zM963 909h4V910h-4zM1011 897h4V898h-4zM1059 925h4V926h-4zM1075 920h4V921h-4zM1155 888h4V889h-4zM1203 891h4V892h-4zM1243 901h4V902h-4zM1339 923h4V924h-4z"/>
</g>
<text x="1843" y="861.500" textLength="24" lengthAdjust="spacingAndGlyphs" class="grn">2500</text>
<text x="1862" y="894.500" textLength="6" lengthAdjust="spacingAndGlyphs" class="grn">0</text>
<text x="1839" y="928.500" textLength="28" lengthAdjust="spacingAndGlyphs" class="red">-2500</text>
<text x="1839" y="961.500" textLength="28" lengthAdjust="spacingAndGlyphs" class="red">-5000</text>
<path d="M1869 864h3M1869 890h3M1869 917h3M1869 944h3M1869 970h3" stroke="#aaa" fill="none"/>
<text x="1873" y="868.500" textLength="24" lengthAdjust="spacingAndGlyphs">2000</text>
<text x="1873" y="894.500" textLength="6" lengthAdjust="spacingAndGlyphs">0</text>
<text x="1873" y="922" textLength="29" lengthAdjust="spacingAndGlyphs">-2000</text>
<text x="1873" y="949" textLength="29" lengthAdjust="spacingAndGlyphs">-4000</text>
<text x="1873" y="975" textLength="29" lengthAdjust="spacingAndGlyphs">-6000</text>
<path d="M301.500 999v3M349.500 999v3M389.500 999v3M430.500 999v3M469.500 999v3M590.500 999v3M621.500 999v3M653.500 999v3M685.500 999v3M717.500 999v3M749.500 999v3M781.500 999v3M813.500 999v3M845.500 999v3M877.500 999v3M909.500 999v3M941.500 999v3M973.500 999v3M1005.500 999v3M1037.500 999v3M1069.500 999v3M1101.500 999v3M1133.500 999v3M1165.500 999v3M1197.500 999v3M1229.500 999v3M1261.500 999v3M1293.500 999v3M1325.500 999v3M1357.500 999v3M1389.500 999v3M1421.500 999v3M1453.500 999v3M1493.500 999v3M1533.500 999v3M1573.500 999v3M1613.500 999v3M1653.500 999v3M1693.500 999v3M1733.500 999v3M1773.500 999v3M1813.500 999v3M1853.500 999v3" stroke="#bbb" fill="none"/>
<rect x="231" y="1004" width="43" height="14" fill="#000"/>
<text class="w" x="232" y="1015" textLength="41" lengthAdjust="spacingAndGlyphs">9-28 We</text>
<rect x="529" y="1004" width="41" height="14" fill="#000"/>
<text class="w" x="530" y="1015" textLength="39" lengthAdjust="spacingAndGlyphs">9-29 Th</text>
<text class="c" x="301.500" y="1015" textLength="26" lengthAdjust="spacingAndGlyphs">16:00</text>
<text class="c" x="349" y="1015" textLength="26" lengthAdjust="spacingAndGlyphs">16:01</text>
<text class="c" x="389.500" y="1015" textLength="26" lengthAdjust="spacingAndGlyphs">16:05</text>
<text class="c" x="430" y="1015" textLength="26" lengthAdjust="spacingAndGlyphs">16:47</text>
<text class="c" x="469" y="1015" textLength="26" lengthAdjust="spacingAndGlyphs">20:04</text>
<text class="c" x="590" y="1015" textLength="21" lengthAdjust="spacingAndGlyphs">1:46</text>
<text class="c" x="621.500" y="1015" textLength="21" lengthAdjust="spacingAndGlyphs">2:14</text>
<text class="c" x="653" y="1015" textLength="21" lengthAdjust="spacingAndGlyphs">2:55</text>
<text class="c" x="685" y="1015" textLength="21" lengthAdjust="spacingAndGlyphs">3:18</text>
<text class="c" x="717.500" y="1015" textLength="21" lengthAdjust="spacingAndGlyphs">3:38</text>
<text class="c" x="749" y="1015" textLength="21" lengthAdjust="spacingAndGlyphs">4:01</text>
<text class="c" x="781" y="1015" textLength="21" lengthAdjust="spacingAndGlyphs">4:33</text>
<text class="c" x="813.500" y="1015" textLength="21" lengthAdjust="spacingAndGlyphs">5:12</text>
<text class="c" x="845.500" y="1015" textLength="21" lengthAdjust="spacingAndGlyphs">5:44</text>
<text class="c" x="877.500" y="1015" textLength="21" lengthAdjust="spacingAndGlyphs">6:25</text>
<text class="c" x="909.500" y="1015" textLength="21" lengthAdjust="spacingAndGlyphs">7:14</text>
<text class="c" x="941.500" y="1015" textLength="21" lengthAdjust="spacingAndGlyphs">7:47</text>
<text class="c" x="973" y="1015" textLength="21" lengthAdjust="spacingAndGlyphs">8:11</text>
<text class="c" x="1005" y="1015" textLength="21" lengthAdjust="spacingAndGlyphs">8:30</text>
<text class="c" x="1037" y="1015" textLength="21" lengthAdjust="spacingAndGlyphs">8:35</text>
<text class="c" x="1069" y="1015" textLength="21" lengthAdjust="spacingAndGlyphs">8:41</text>
<text class="c" x="1101" y="1015" textLength="21" lengthAdjust="spacingAndGlyphs">8:55</text>
<text class="c" x="1133.500" y="1015" textLength="21" lengthAdjust="spacingAndGlyphs">9:04</text>
<text class="c" x="1165.500" y="1015" textLength="21" lengthAdjust="spacingAndGlyphs">9:16</text>
<text class="c" x="1197" y="1015" textLength="21" lengthAdjust="spacingAndGlyphs">9:25</text>
<text class="c" x="1229" y="1015" textLength="21" lengthAdjust="spacingAndGlyphs">9:30</text>
<text class="c" x="1261" y="1015" textLength="21" lengthAdjust="spacingAndGlyphs">9:32</text>
<text class="c" x="1293.500" y="1015" textLength="21" lengthAdjust="spacingAndGlyphs">9:34</text>
<text class="c" x="1325.500" y="1015" textLength="21" lengthAdjust="spacingAndGlyphs">9:36</text>
<text class="c" x="1357.500" y="1015" textLength="21" lengthAdjust="spacingAndGlyphs">9:38</text>
<text class="c" x="1389" y="1015" textLength="21" lengthAdjust="spacingAndGlyphs">9:40</text>
<text class="c" x="1421" y="1015" textLength="21" lengthAdjust="spacingAndGlyphs">9:42</text>
<text class="c" x="1453.500" y="1015" textLength="21" lengthAdjust="spacingAndGlyphs">9:44</text>
<text class="c" x="1493.500" y="1015" textLength="26" lengthAdjust="spacingAndGlyphs">10:15</text>
<text class="c" x="1533.500" y="1015" textLength="26" lengthAdjust="spacingAndGlyphs">10:46</text>
<text class="c" x="1573.500" y="1015" textLength="26" lengthAdjust="spacingAndGlyphs">11:17</text>
<text class="c" x="1613.500" y="1015" textLength="26" lengthAdjust="spacingAndGlyphs">11:48</text>
<text class="c" x="1653.500" y="1015" textLength="26" lengthAdjust="spacingAndGlyphs">12:19</text>
<text class="c" x="1693.500" y="1015" textLength="26" lengthAdjust="spacingAndGlyphs">12:50</text>
<text class="c" x="1733.500" y="1015" textLength="26" lengthAdjust="spacingAndGlyphs">13:21</text>
<text class="c" x="1773.500" y="1015" textLength="26" lengthAdjust="spacingAndGlyphs">13:52</text>
<text class="c" x="1813.500" y="1015" textLength="26" lengthAdjust="spacingAndGlyphs">14:23</text>
<text class="c" x="1853.500" y="1015" textLength="26" lengthAdjust="spacingAndGlyphs">14:54</text>
<rect x="1895" y="1002" width="20" height="15" fill="#00c000"/>
<text x="1899" y="1014" style="font-size:13px;fill:#111" textLength="16" lengthAdjust="spacingAndGlyphs">7 L</text>
<path d="M8 1023l-4 4 4 4M1907 1023l4 4-4 4" stroke="#555" stroke-width="2" fill="none"/>
</svg>
</body></html>
